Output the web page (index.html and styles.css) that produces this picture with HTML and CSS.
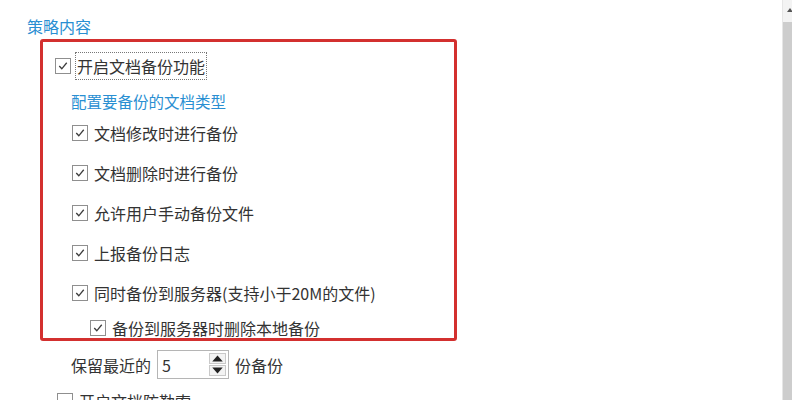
FILE: index.html
```html
<!DOCTYPE html>
<html lang="zh-CN">
<head>
    <meta charset="UTF-8">
    <meta name="viewport" content="width=device-width, initial-scale=1.0">
    <title>策略内容</title>
    <link rel="stylesheet" href="styles.css">
</head>
<body>
    <div class="page">
        <div class="content">
            <div class="section-title">策略内容</div>
            <div class="highlight">
                <label class="opt top">
                    <span class="box checked"><svg viewBox="0 0 15 15"><polyline points="3.5,7.5 6.2,10.5 11.5,4"/></svg></span>
                    <span class="focus">开启文档备份功能</span>
                </label>
                <div class="sub-title">配置要备份的文档类型</div>
                <div class="opts">
                    <label class="opt">
                        <span class="box checked"><svg viewBox="0 0 15 15"><polyline points="3.5,7.5 6.2,10.5 11.5,4"/></svg></span>
                        <span>文档修改时进行备份</span>
                    </label>
                    <label class="opt">
                        <span class="box checked"><svg viewBox="0 0 15 15"><polyline points="3.5,7.5 6.2,10.5 11.5,4"/></svg></span>
                        <span>文档删除时进行备份</span>
                    </label>
                    <label class="opt">
                        <span class="box checked"><svg viewBox="0 0 15 15"><polyline points="3.5,7.5 6.2,10.5 11.5,4"/></svg></span>
                        <span>允许用户手动备份文件</span>
                    </label>
                    <label class="opt">
                        <span class="box checked"><svg viewBox="0 0 15 15"><polyline points="3.5,7.5 6.2,10.5 11.5,4"/></svg></span>
                        <span>上报备份日志</span>
                    </label>
                    <label class="opt">
                        <span class="box checked"><svg viewBox="0 0 15 15"><polyline points="3.5,7.5 6.2,10.5 11.5,4"/></svg></span>
                        <span>同时备份到服务器(支持小于20M的文件)</span>
                    </label>
                    <label class="opt nested">
                        <span class="box checked"><svg viewBox="0 0 15 15"><polyline points="3.5,7.5 6.2,10.5 11.5,4"/></svg></span>
                        <span>备份到服务器时删除本地备份</span>
                    </label>
                </div>
            </div>
            <div class="keep">
                <span>保留最近的</span>
                <div class="spin">
                    <span class="spin-val">5</span>
                    <div class="spin-btns">
                        <span class="spin-btn"><svg viewBox="0 0 10 6"><polygon points="5,1 8.5,5 1.5,5"/></svg></span>
                        <span class="spin-btn"><svg viewBox="0 0 10 6"><polygon points="1.5,1 8.5,1 5,5"/></svg></span>
                    </div>
                </div>
                <span>份备份</span>
            </div>
            <label class="opt bottom">
                <span class="box"></span>
                <span>开启文档防勒索</span>
            </label>
        </div>
        <div class="scrollbar">
            <div class="scroll-arrow"><svg viewBox="0 0 9 20"><polygon points="7,8 10,12 4,12"/></svg></div>
            <div class="scroll-thumb"></div>
        </div>
    </div>
</body>
</html>
```

FILE: styles.css
```css
body {
    margin: 0;
    background: #fff;
    font-family: "Noto Sans CJK SC", "Noto Sans", sans-serif;
    font-size: 16px;
    color: #333;
}
.page {
    display: flex;
    height: 400px;
    overflow: hidden;
}
.content {
    flex: 1;
    padding: 16px 0 0 27px;
    display: flex;
    flex-direction: column;
}
.section-title {
    color: #2a8fd2;
    line-height: 20px;
}
.highlight {
    margin: 3px 0 0 13px;
    width: 417px;
    height: 303px;
    border: 3px solid #d3302f;
    border-radius: 3px;
    padding: 14px 0 0 12px;
    box-sizing: border-box;
}
.opt {
    display: flex;
    align-items: center;
    gap: 6px;
    line-height: 20px;
    height: 20px;
}
.box {
    width: 14px;
    height: 14px;
    border: 1px solid #8f8f8f;
    background: #fff;
    display: flex;
    flex: none;
}
.box svg {
    width: 14px;
    height: 14px;
    fill: none;
    stroke: #3c3c3c;
    stroke-width: 1.4;
}
.top .focus {
    outline: 1px dotted #777;
    padding: 3px 1px;
    margin-left: -1px;
}
.sub-title {
    color: #2a8fd2;
    font-size: 15.5px;
    line-height: 20px;
    margin: 15px 0 0 16px;
}
.opts {
    display: flex;
    flex-direction: column;
    gap: 20px;
    margin: 12px 0 0 17px;
}
.opts .nested {
    margin: -5px 0 0 18px;
}
.keep {
    display: flex;
    align-items: center;
    gap: 6px;
    margin: 9px 0 0 44px;
    height: 32px;
}
.spin {
    display: flex;
    align-items: center;
    width: 72px;
    height: 29px;
    border: 1px solid #b5b5b5;
    padding: 0 2px 0 4px;
    box-sizing: border-box;
}
.spin-val {
    flex: 1;
    font-size: 16px;
}
.spin-btns {
    display: flex;
    flex-direction: column;
    gap: 1px;
}
.spin-btn {
    width: 17px;
    height: 11px;
    border: 1px solid #c9c9c9;
    background: #f3f3f3;
    display: flex;
    box-sizing: border-box;
}
.spin-btn svg {
    width: 15px;
    height: 9px;
    fill: #222;
}
.bottom {
    margin: 12px 0 0 30px;
}
.scrollbar {
    width: 9px;
    flex: none;
    display: flex;
    flex-direction: column;
    border-left: 1px solid #e6e6e6;
}
.scroll-arrow {
    height: 22px;
    background: #f3f3f3;
}
.scroll-arrow svg {
    width: 9px;
    height: 20px;
    fill: #555;
}
.scroll-thumb {
    flex: 1;
    background: #cdcdcd;
}
```
